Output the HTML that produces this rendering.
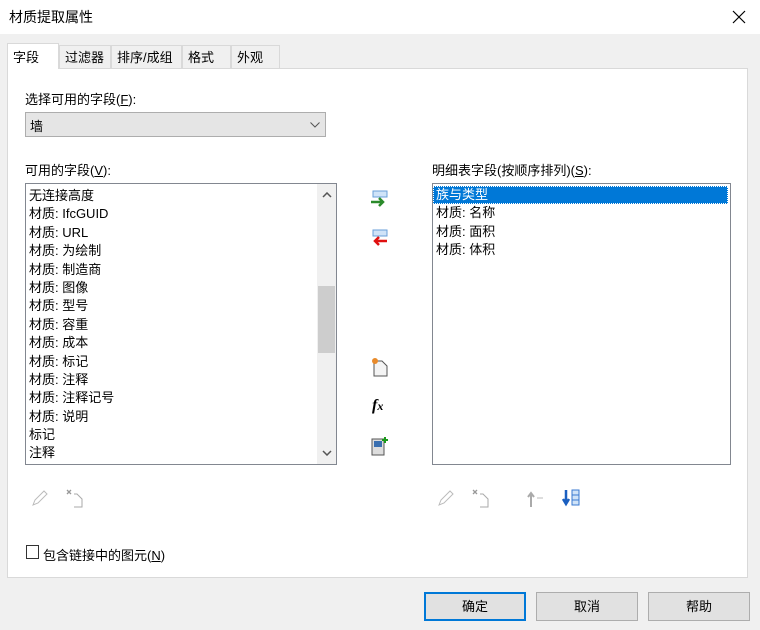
<!DOCTYPE html>
<html><head><meta charset="utf-8"><style>
*{box-sizing:border-box;margin:0;padding:0}
body{width:760px;height:630px;background:#f0f0f0;font-family:"Liberation Sans","Noto Sans CJK SC",sans-serif;font-size:13px;color:#000;position:relative;overflow:hidden}
.abs{position:absolute}
.title{left:0;top:0;width:760px;height:34px;background:#fff}
.tab{top:45px;height:23px;border:1px solid #d9d9d9;border-bottom:none;background:#f0f0f0;padding:1px 0 0 5px;font-size:13px}
.panel{left:7px;top:68px;width:741px;height:510px;background:#fff;border:1px solid #d9d9d9}
.list{background:#fff;border:1px solid #828790}
.item{height:18.4px;line-height:18.4px;padding-left:3px;white-space:nowrap}
.btn{top:592px;width:102px;height:29px;background:#e1e1e1;border:1px solid #adadad;text-align:center;line-height:27px}
u{text-decoration:underline}
</style></head><body>
<div class="abs title"><div class="abs" style="left:9px;top:7px;font-size:14px">材质提取属性</div>
<svg class="abs" style="left:732px;top:10px" width="14" height="14"><path d="M1 1L13 13M13 1L1 13" stroke="#000" stroke-width="1.2"/></svg></div>
<div class="abs panel"></div>
<div class="abs tab" style="left:7px;top:43px;height:26px;width:52px;background:#fff;border-color:#d9d9d9;z-index:2;padding-top:3px">字段</div>
<div class="abs tab" style="left:59px;width:52px">过滤器</div>
<div class="abs tab" style="left:111px;width:71px">排序/成组</div>
<div class="abs tab" style="left:182px;width:49px">格式</div>
<div class="abs tab" style="left:231px;width:49px">外观</div>
<div class="abs" style="left:25px;top:89px">选择可用的字段(<u>F</u>):</div>
<div class="abs" style="left:25px;top:112px;width:301px;height:25px;background:#e5e5e5;border:1px solid #adadad;padding:3px 0 0 4px">墙
<svg class="abs" style="left:284px;top:9px" width="10" height="6"><path d="M0.5 0.5L5 5L9.5 0.5" stroke="#555" fill="none"/></svg></div>
<div class="abs" style="left:25px;top:160px">可用的字段(<u>V</u>):</div>
<div class="abs list" style="left:25px;top:183px;width:312px;height:282px;padding-top:3px">
<div class="item">无连接高度</div><div class="item">材质: IfcGUID</div><div class="item">材质: URL</div><div class="item">材质: 为绘制</div><div class="item">材质: 制造商</div><div class="item">材质: 图像</div><div class="item">材质: 型号</div><div class="item">材质: 容重</div><div class="item">材质: 成本</div><div class="item">材质: 标记</div><div class="item">材质: 注释</div><div class="item">材质: 注释记号</div><div class="item">材质: 说明</div><div class="item">标记</div><div class="item">注释</div>
<div class="abs" style="left:291px;top:0;width:19px;height:280px;background:#f0f0f0"></div>
<div class="abs" style="left:292px;top:102px;width:17px;height:67px;background:#cdcdcd"></div>
<svg class="abs" style="left:296px;top:8px" width="10" height="6"><path d="M1 5L5 1L9 5" stroke="#555" stroke-width="1.5" fill="none"/></svg>
<svg class="abs" style="left:296px;top:266px" width="10" height="6"><path d="M1 1L5 5L9 1" stroke="#555" stroke-width="1.5" fill="none"/></svg>
</div>
<div class="abs" style="left:432px;top:160px">明细表字段(按顺序排列)(<u>S</u>):</div>
<div class="abs list" style="left:432px;top:183px;width:299px;height:282px;padding:2px 2px 2px 0">
<div class="item" style="background:#0078d7;color:#fff;outline:1px dotted #fff;outline-offset:-1px">族与类型</div><div class="item">材质: 名称</div><div class="item">材质: 面积</div><div class="item">材质: 体积</div></div>
<svg class="abs" style="left:370px;top:190px" width="20" height="20"><rect x="3" y="1" width="14" height="6" fill="#cfe3f8" stroke="#6a9fd8"/><path d="M1 12H13M9 8L13 12L9 16" stroke="#2a8a2a" stroke-width="2.5" fill="none"/></svg>
<svg class="abs" style="left:370px;top:229px" width="20" height="20"><rect x="3" y="1" width="14" height="6" fill="#cfe3f8" stroke="#6a9fd8"/><path d="M17 12H5M9 8L5 12L9 16" stroke="#e01010" stroke-width="2.5" fill="none"/></svg>
<svg class="abs" style="left:370px;top:357px" width="20" height="20"><path d="M4 4H12L17 9V19H4Z" fill="#f4f4f4" stroke="#555"/><circle cx="5" cy="4" r="3" fill="#e88a2a"/></svg>
<div class="abs" style="left:372px;top:397px;font-family:'Liberation Serif',serif;font-style:italic;font-weight:bold;font-size:16px">f<span style="font-size:12px">x</span></div>
<svg class="abs" style="left:370px;top:436px" width="20" height="20"><rect x="2" y="3" width="12" height="16" fill="#ddd" stroke="#555"/><rect x="4" y="5" width="8" height="6" fill="#3a6fb0"/><path d="M15 1V7M12 4H18" stroke="#1a9a1a" stroke-width="2"/></svg>
<svg class="abs" style="left:31px;top:489px" width="18" height="18"><path d="M2 16L4 11L13 2L16 5L7 14Z" fill="none" stroke="#bbb"/></svg>
<svg class="abs" style="left:66px;top:489px" width="20" height="20"><path d="M1 1L5 5M5 1L1 5" stroke="#999" stroke-width="1.3"/><path d="M8 5H11L16 10V18H8" fill="none" stroke="#aaa"/></svg>
<svg class="abs" style="left:437px;top:489px" width="18" height="18"><path d="M2 16L4 11L13 2L16 5L7 14Z" fill="none" stroke="#bbb"/></svg>
<svg class="abs" style="left:472px;top:489px" width="20" height="20"><path d="M1 1L5 5M5 1L1 5" stroke="#999" stroke-width="1.3"/><path d="M8 5H11L16 10V18H8" fill="none" stroke="#aaa"/></svg>
<svg class="abs" style="left:526px;top:489px" width="20" height="20"><path d="M5 18V5M2 8L5 4L8 8" stroke="#aaa" stroke-width="2" fill="none"/><path d="M11 9H17" stroke="#bbb"/></svg>
<svg class="abs" style="left:561px;top:488px" width="22" height="20"><path d="M5 2V15M2 11L5 16L8 11" stroke="#1a5fc0" stroke-width="2.5" fill="none"/><rect x="11" y="2" width="7" height="15" fill="#cfe3f8" stroke="#3a7ad0"/><path d="M11 7H18M11 12H18" stroke="#3a7ad0"/></svg>
<div class="abs" style="left:26px;top:545px;width:13px;height:14px;border:1px solid #333;background:#fff"></div>
<div class="abs" style="left:43px;top:545px">包含链接中的图元(<u>N</u>)</div>
<div class="abs btn" style="left:424px;border:2px solid #0078d7;line-height:25px">确定</div>
<div class="abs btn" style="left:536px">取消</div>
<div class="abs btn" style="left:648px">帮助</div>
</body></html>
